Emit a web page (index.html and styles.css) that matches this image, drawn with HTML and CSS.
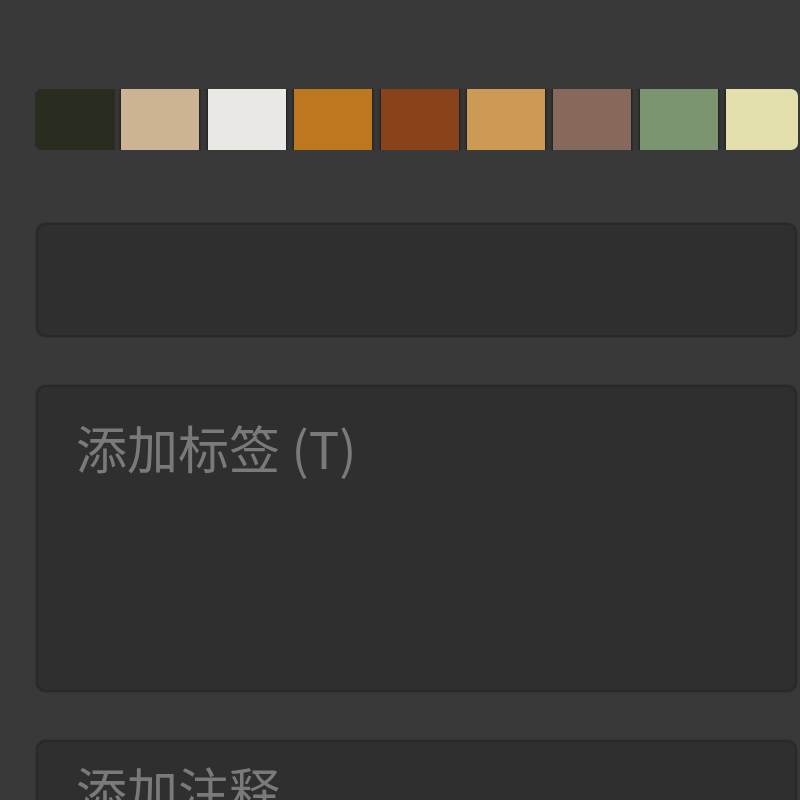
FILE: index.html
```html
<!DOCTYPE html>
<html lang="zh-CN">
<head>
<meta charset="utf-8">
<title>Palette</title>
<link rel="stylesheet" href="styles.css">
</head>
<body>
<div class="panel">
  <div class="swatches">
    <div class="swatch s1"></div>
    <div class="swatch s2"></div>
    <div class="swatch s3"></div>
    <div class="swatch s4"></div>
    <div class="swatch s5"></div>
    <div class="swatch s6"></div>
    <div class="swatch s7"></div>
    <div class="swatch s8"></div>
    <div class="swatch s9"></div>
  </div>
  <div class="field field-name"></div>
  <div class="field field-tags"><span class="placeholder">添加标签 (T)</span></div>
  <div class="field field-notes"><span class="placeholder">添加注释</span></div>
</div>
</body>
</html>
```

FILE: styles.css
```css
html, body {
  margin: 0;
  padding: 0;
  background: #393939;
  height: 100%;
  overflow: hidden;
}

.panel {
  padding: 89px 2px 0 35px;
  display: flex;
  flex-direction: column;
  font-family: "Noto Sans CJK SC", "Noto Sans", sans-serif;
}

.swatches {
  display: flex;
  gap: 8.4px;
  height: 61px;
  border-radius: 7px;
  overflow: hidden;
}

.swatch {
  flex: 0 0 78px;
  height: 100%;
  box-shadow: 0 0 0 1px #262626, 0 0 3px 1px rgba(0, 0, 0, 0.45);
}

.s1 { background: #282d1f; }
.s2 { background: #cbb393; }
.s3 { background: #e9e8e4; }
.s4 { background: #bd781f; }
.s5 { background: #88431a; }
.s6 { background: #cd9a55; }
.s7 { background: #86695a; }
.s8 { background: #7a9570; }
.s9 { background: #e3e0ae; }

.field {
  margin-left: 1px;
  margin-right: 1px;
  background: #2f2f2f;
  border: 2px solid #292929;
  border-radius: 10px;
  box-shadow: 0 0 2px rgba(0, 0, 0, 0.35);
  box-sizing: border-box;
  padding-left: 38px;
}

.field-name {
  margin-top: 73px;
  height: 114px;
}

.field-tags {
  margin-top: 48px;
  height: 307px;
  padding-top: 30px;
}

.field-notes {
  margin-top: 48px;
  height: 200px;
  padding-top: 17px;
}

.placeholder {
  display: block;
  color: #7a7a7a;
  font-size: 51px;
  line-height: 60px;
}
```
